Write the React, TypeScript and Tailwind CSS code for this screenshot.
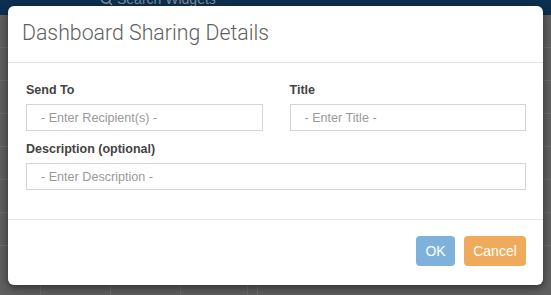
import { Search } from "lucide-react";

const COLS = [40, 110, 180, 247, 257];

export default function App() {
  return (
    <div className="relative h-[295px] w-[551px] overflow-hidden bg-[#5f5f60] font-['Liberation_Sans',Arial,sans-serif]">
      {/* page behind the overlay */}
      <div className="flex h-[15px] items-start overflow-hidden bg-[#0d2f4f] pl-[100px]">
        <div className="-mt-[11px] flex items-center gap-1 text-[14px] text-[#7d8a99]">
          <Search size={13} strokeWidth={3} />
          <span>Search Widgets</span>
        </div>
      </div>
      <div className="flex flex-col">
        {[54, 87, 120, 153, 186, 219, 252].map((y) => (
          <div key={y} className="h-[33px] border-b border-[#6a6a6b]" />
        ))}
      </div>
      {COLS.map((x) => (
        <div key={x} className="absolute bottom-0 h-[12px] w-px bg-[#6b6b6c]" style={{ left: x }} />
      ))}

      {/* modal */}
      <div className="absolute left-[8px] top-[6px] flex h-[279px] w-[535px] flex-col rounded-[6px] bg-white shadow-[0_3px_9px_rgba(0,0,0,0.5)]">
        <div className="h-[57px] border-b border-[#e5e5e5] pl-[14px] pt-[13px]">
          <h4 className="font-['Roboto',sans-serif] text-[21.3px] leading-[28px] font-light text-[#5f5f5f]">
            Dashboard Sharing Details
          </h4>
        </div>

        <div className="h-[157px] border-b border-[#e5e5e5] pl-[18px] pr-[17px] pt-[18px]">
          <div className="grid grid-cols-2 gap-x-[27px]">
            <Field label="Send To" placeholder="- Enter Recipient(s) -" />
            <Field label="Title" placeholder="- Enter Title -" />
          </div>
          <div className="mt-[9px]">
            <Field label="Description (optional)" placeholder="- Enter Description -" />
          </div>
        </div>

        <div className="flex flex-1 items-start justify-end gap-[9px] pr-[17px] pt-[16px]">
          <button className="h-[30px] w-[39px] rounded-[4px] bg-[#7eb2dc] text-[14px] text-white">OK</button>
          <button className="h-[30px] w-[62px] rounded-[4px] bg-[#efab5b] text-[14px] text-white">Cancel</button>
        </div>
      </div>
    </div>
  );
}

function Field({ label, placeholder }: { label: string; placeholder: string }) {
  return (
    <div className="flex flex-col">
      <label className="text-[12.5px] leading-[18px] font-bold text-[#444]">{label}</label>
      <input
        placeholder={placeholder}
        className="mt-[5px] h-[27px] border border-[#d5d5d5] px-[14px] text-[12.6px] text-[#555] placeholder:text-[#9a9a9a] focus:outline-none"
      />
    </div>
  );
}
